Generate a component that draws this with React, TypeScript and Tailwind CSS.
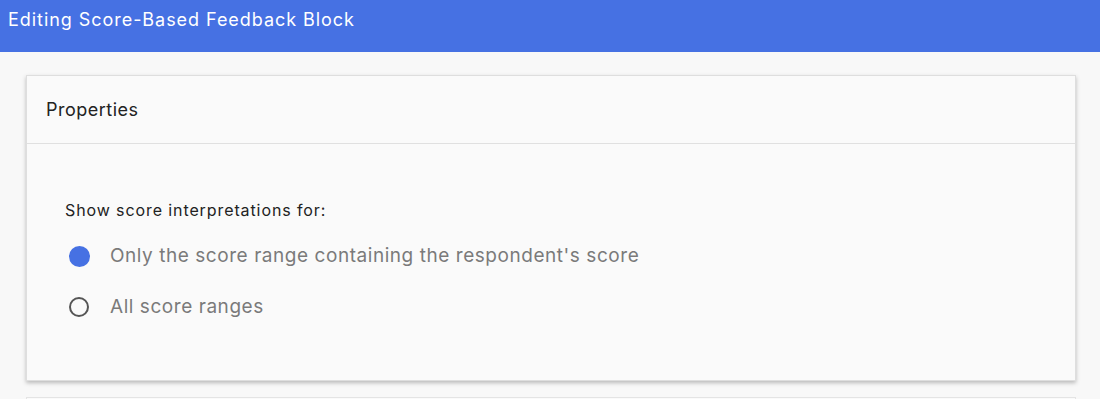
import React from "react";

export default function App() {
  return (
    <div className="w-[1100px] h-[399px] overflow-hidden bg-[#f8f8f8] font-['Inter',sans-serif]">
      <div className="h-[52px] bg-[#4671e3] flex items-center px-[8px]">
        <span className="text-white text-[18px] -mt-[13px] tracking-[0.95px]">Editing Score-Based Feedback Block</span>
      </div>
      <div className="pt-[23px] px-[26px]">
        <div className="w-[1050px] bg-[#fafafa] border border-[#dedede] shadow-[0_2px_4px_rgba(0,0,0,0.25)]">
          <div className="h-[68px] border-b border-[#e0e0e0] flex items-center px-[19px]">
            <span className="text-[18px] text-[#222] tracking-[0.5px]">Properties</span>
          </div>
          <div className="pt-[54px] pb-[61px] px-[38px]">
            <div className="text-[16px] text-[#222] tracking-[0.9px]">Show score interpretations for:</div>
            <div className="mt-[22px] flex flex-col gap-[27px]">
              <div className="flex items-center h-[24px]">
                <div className="w-[21px] h-[21px] rounded-full bg-[#4671e3] ml-[4px]" />
                <span className="ml-[20px] text-[19px] text-[#7a7a7a] tracking-[0.55px]">Only the score range containing the respondent's score</span>
              </div>
              <div className="flex items-center h-[24px]">
                <div className="w-[20px] h-[20px] rounded-full border-2 border-[#555] ml-[4px]" />
                <span className="ml-[21px] text-[19px] text-[#7a7a7a] tracking-[0.55px]">All score ranges</span>
              </div>
            </div>
          </div>
        </div>
        <div className="mt-[16px] w-[1050px] h-[40px] bg-[#fafafa] border border-[#e4e4e4]" />
      </div>
    </div>
  );
}
